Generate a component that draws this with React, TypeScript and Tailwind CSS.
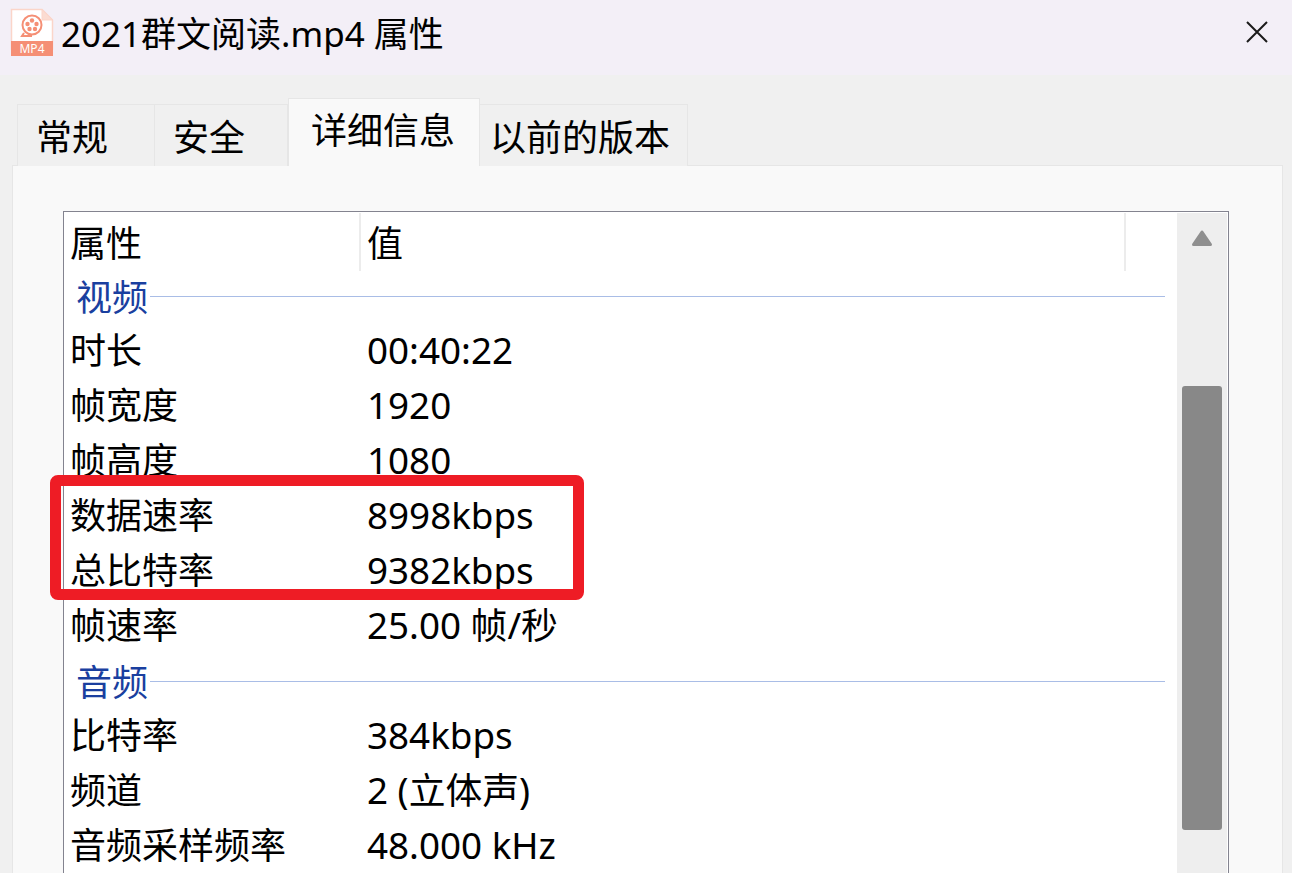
import React from 'react';

const FONT = "font-['Noto_Sans','Noto_Sans_CJK_SC',sans-serif]";

type Row =
    | { kind: 'group'; label: string }
    | { kind: 'prop'; name: string; value: string };

const rows: Row[] = [
    { kind: 'group', label: '视频' },
    { kind: 'prop', name: '时长', value: '00:40:22' },
    { kind: 'prop', name: '帧宽度', value: '1920' },
    { kind: 'prop', name: '帧高度', value: '1080' },
    { kind: 'prop', name: '数据速率', value: '8998kbps' },
    { kind: 'prop', name: '总比特率', value: '9382kbps' },
    { kind: 'prop', name: '帧速率', value: '25.00 帧/秒' },
    { kind: 'group', label: '音频' },
    { kind: 'prop', name: '比特率', value: '384kbps' },
    { kind: 'prop', name: '频道', value: '2 (立体声)' },
    { kind: 'prop', name: '音频采样频率', value: '48.000 kHz' },
];

const FileIcon = () => (
    <svg width="44" height="48" viewBox="0 0 44 48" className="-mt-[11px] shrink-0">
        <path d="M1.5 1.5H32L42.5 12V41H1.5Z" fill="#fff" stroke="#fbd5c9" strokeWidth="1.5" />
        <path d="M32 1.5V12H42.5Z" fill="#fbdcd2" stroke="#fbd5c9" strokeWidth="1" />
        <rect x="1" y="33" width="42" height="15" fill="#f58f75" />
        <text x="22" y="45" textAnchor="middle" fontSize="12" fontFamily="Noto Sans, sans-serif" fill="#fff">MP4</text>
        <circle cx="22" cy="17" r="9.5" fill="none" stroke="#f58f75" strokeWidth="2" />
        <path d="M14 25 L12 28 H22" fill="none" stroke="#f58f75" strokeWidth="2" />
        <circle cx="22" cy="12.5" r="2.2" fill="#f58f75" />
        <circle cx="26.5" cy="16" r="2.2" fill="#f58f75" />
        <circle cx="25" cy="21" r="2.2" fill="#f58f75" />
        <circle cx="19.5" cy="21" r="2.2" fill="#f58f75" />
        <circle cx="17.5" cy="16" r="2.2" fill="#f58f75" />
    </svg>
);

const Tab = ({ label, className }: { label: string; className: string }) => (
    <div className={`border-[#e6e6e6] text-[36px] leading-[48px] whitespace-nowrap ${className}`}>{label}</div>
);

export default function App() {
    return (
        <div className={`relative h-[873px] w-[1292px] overflow-hidden bg-[#f0f0f0] text-black ${FONT}`}>
            {/* title bar */}
            <div className="flex h-[75px] items-center bg-[#f3eff7] pl-[10px] pr-[24px]">
                <FileIcon />
                <div className="-mt-[7px] ml-[7px] text-[35px] leading-[48px] whitespace-nowrap">2021群文阅读.mp4 属性</div>
                <svg width="22" height="22" viewBox="0 0 22 22" className="-mt-[11px] ml-auto">
                    <path d="M1 1L21 21M21 1L1 21" stroke="#1a1a1a" strokeWidth="2" />
                </svg>
            </div>

            {/* tabs */}
            <div className="relative z-10 ml-[17px] mt-[23px] -mb-px flex h-[68px] items-end">
                <Tab label="常规" className="h-[62px] w-[138px] border border-b-0 bg-[#f0f0f0] pl-[18px] pt-[9px]" />
                <Tab label="安全" className="h-[62px] w-[133px] border-y border-r border-b-0 bg-[#f0f0f0] pl-[18px] pt-[9px]" />
                <Tab label="详细信息" className="h-[68px] w-[192px] border border-b-0 bg-[#f9f9f9] pl-[22px] pt-[8px]" />
                <Tab label="以前的版本" className="h-[62px] w-[208px] border-y border-r border-b-0 bg-[#f0f0f0] pl-[10px] pt-[9px]" />
            </div>

            {/* page */}
            <div className="ml-[12px] h-[720px] w-[1271px] border border-[#e6e6e6] bg-[#f9f9f9] pl-[50px] pt-[45px]">
                <div className="flex h-[700px] w-[1166px] border border-[#83838f] bg-white pt-[1px] pr-[1px]">
                    <div className="w-[1113px] shrink-0">
                        <div className="flex h-[58px] items-start text-[36px] leading-[62px]">
                            <div className="h-full w-[297px] shrink-0 border-r-2 border-[#ececec] pl-[6px]">属性</div>
                            <div className="h-full w-[765px] shrink-0 border-r-2 border-[#ececec] pl-[6px]">值</div>
                        </div>
                        {rows.map(row =>
                            row.kind === 'group' ? (
                                <div key={row.label} className="flex h-[55px] items-center pl-[12px]">
                                    <span className="-mt-[2px] text-[36px] leading-[50px] text-[#1a3f9f]">{row.label}</span>
                                    <div className="ml-[2px] h-px w-[1015px] -translate-y-[2px] bg-[#a9bde6]" />
                                </div>
                            ) : (
                                <div key={row.name} className="flex h-[55px] items-center pb-[6px] text-[36px] leading-[47px]">
                                    <div className="w-[297px] shrink-0 pl-[6px]">{row.name}</div>
                                    <div className="pl-[6px] text-[36.8px]">{row.value}</div>
                                </div>
                            ),
                        )}
                    </div>

                    {/* scrollbar */}
                    <div className="flex w-[50px] flex-col items-center bg-[#eeeeee] pt-[16px]">
                        <svg width="22" height="18" viewBox="0 0 22 18" className="block">
                            <path d="M11 3L19.5 15.5H2.5Z" fill="#8f8f8f" stroke="#8f8f8f" strokeWidth="3" strokeLinejoin="round" />
                        </svg>
                        <div className="mt-[139px] h-[444px] w-[40px] rounded-[3px] bg-[#888888]" />
                    </div>
                </div>
            </div>

            {/* red annotation */}
            <div className="absolute left-[50px] top-[475px] h-[125px] w-[534px] rounded-[8px] border-[11px] border-[#ee1c25]" />
        </div>
    );
}
